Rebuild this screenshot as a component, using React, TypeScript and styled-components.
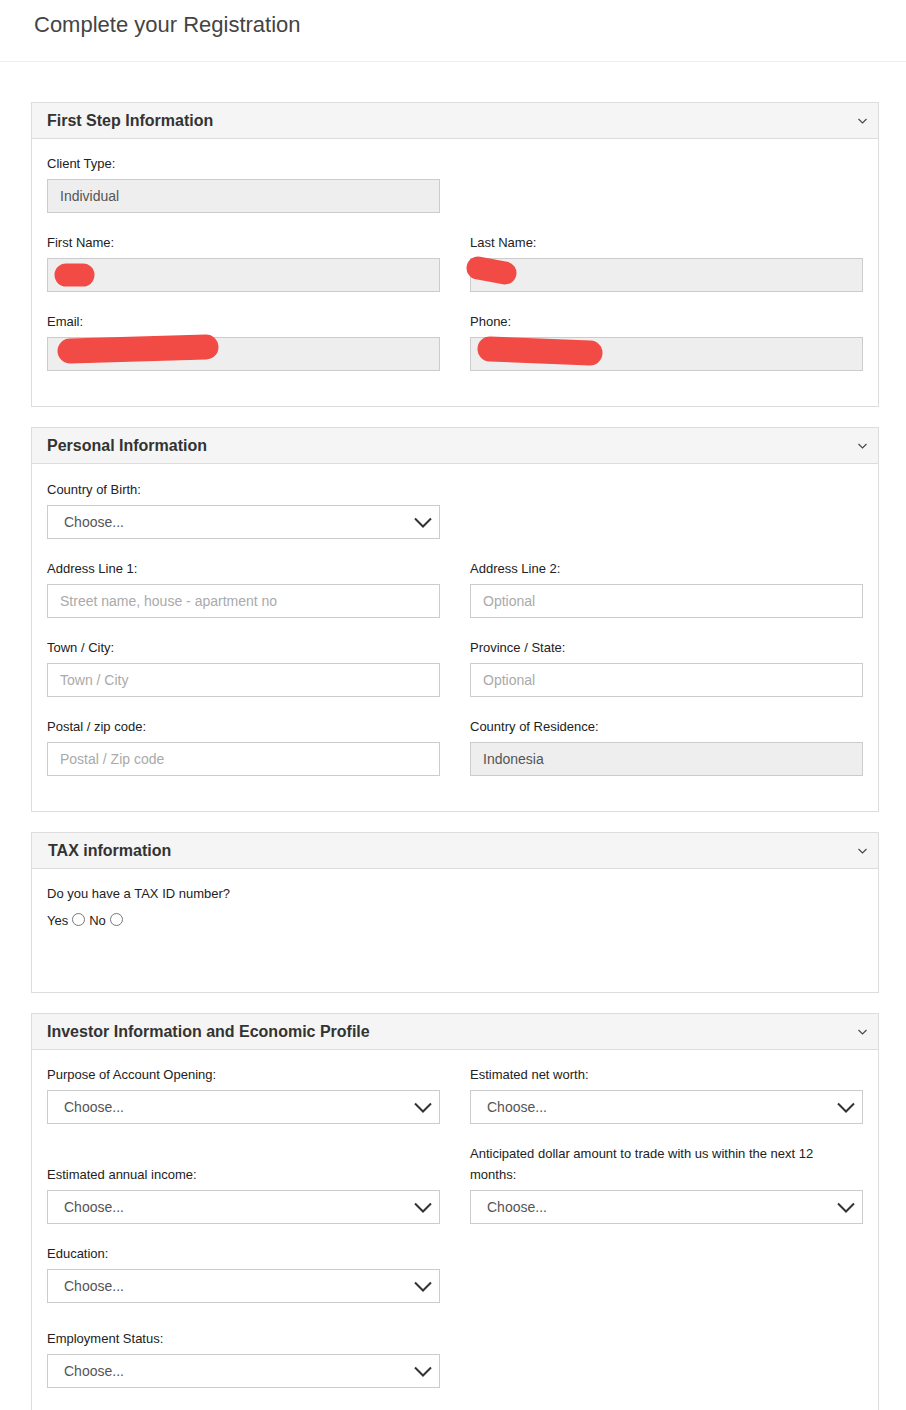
import styled, { createGlobalStyle } from "styled-components";

const GlobalStyle = createGlobalStyle`
  body {
    margin: 0;
    background: #fff;
    font-family: "Liberation Sans", Arial, sans-serif;
    color: #333;
  }
`;

const TopBar = styled.header`
  height: 61px;
  border-bottom: 1px solid #eee;
  display: flex;
  align-items: center;
  padding-left: 34px;
`;

const PageTitle = styled.h1`
  margin: 0;
  margin-top: -11px;
  font-size: 22px;
  font-weight: normal;
  color: #444;
`;

const Content = styled.main`
  padding: 40px 27px 0 31px;
  display: flex;
  flex-direction: column;
  gap: 20px;
`;

const Panel = styled.section`
  border: 1px solid #ddd;
  background: #fff;
`;

const PanelHead = styled.div<{ $indent?: number }>`
  height: 35px;
  background: #f5f5f5;
  border-bottom: 1px solid #ddd;
  display: flex;
  align-items: center;
  justify-content: space-between;
  padding: 0 11px 0 ${(p) => p.$indent ?? 15}px;
`;

const PanelTitle = styled.h2`
  margin: 0;
  font-size: 16px;
  font-weight: bold;
  color: #333;
`;

const PanelBody = styled.div<{ $top?: number }>`
  padding: ${(p) => p.$top ?? 15}px 15px 15px;
`;

const Row = styled.div<{ $alignEnd?: boolean }>`
  display: grid;
  grid-template-columns: 1fr 1fr;
  column-gap: 30px;
  align-items: ${(p) => (p.$alignEnd ? "end" : "start")};
`;

const Group = styled.div<{ $mb?: number }>`
  margin-bottom: ${(p) => p.$mb ?? 20}px;
`;

const Label = styled.label<{ $tall?: boolean }>`
  display: block;
  font-size: 13px;
  line-height: ${(p) => (p.$tall ? 20.5 : 20)}px;
  color: #222;
  margin-bottom: 5px;
`;

const FieldWrap = styled.div`
  position: relative;
`;

const TextInput = styled.input`
  box-sizing: border-box;
  width: 100%;
  height: 34px;
  border: 1px solid #ccc;
  border-radius: 0;
  padding: 0 12px;
  font-family: "Liberation Sans", Arial, sans-serif;
  font-size: 14px;
  color: #555;
  background: #fff;
  outline: none;

  &:disabled {
    background: #eee;
    color: #555;
  }

  &::placeholder {
    color: #aaa;
  }
`;

const SelectBox = styled.div`
  box-sizing: border-box;
  height: 34px;
  border: 1px solid #ccc;
  background: #fff;
  display: flex;
  align-items: center;
  justify-content: space-between;
  padding: 0 7px 0 16px;
  font-size: 14px;
  color: #555;
`;

const Scribble = styled.svg`
  position: absolute;
  left: 0;
  top: 0;
  overflow: visible;
  pointer-events: none;
`;

const Question = styled.div`
  font-size: 13px;
  line-height: 20px;
  color: #222;
  margin-bottom: 6px;
`;

const RadioLine = styled.div`
  display: flex;
  align-items: center;
  font-size: 13px;
  line-height: 22px;
  color: #222;
  margin-bottom: 45px;
`;

const Radio = styled.input`
  appearance: none;
  width: 13px;
  height: 13px;
  border: 1px solid #777;
  border-radius: 50%;
  margin: -3px 4px 0 4px;
  background: #fff;
`;

const Chevron = ({ big }: { big?: boolean }) =>
  big ? (
    <svg width="18" height="11" viewBox="0 0 18 11">
      <path d="M1 1.5 L9 9.5 L17 1.5" fill="none" stroke="#333" strokeWidth="2" />
    </svg>
  ) : (
    <svg width="9" height="6" viewBox="0 0 9 6">
      <path d="M0.5 1 L4.5 5 L8.5 1" fill="none" stroke="#444" strokeWidth="1.1" />
    </svg>
  );

const Select = ({ label, mb, twoLine }: { label: string; mb?: number; twoLine?: boolean }) => (
  <Group $mb={mb}>
    <Label $tall={twoLine}>{label}</Label>
    <SelectBox>
      Choose...
      <Chevron big />
    </SelectBox>
  </Group>
);

type Mark = { x1: number; y1: number; x2: number; y2: number; w: number };

const Field = ({
  label,
  placeholder,
  value,
  disabled,
  mark,
}: {
  label: string;
  placeholder?: string;
  value?: string;
  disabled?: boolean;
  mark?: Mark;
}) => (
  <Group>
    <Label>{label}</Label>
    <FieldWrap>
      <TextInput placeholder={placeholder} defaultValue={value} disabled={disabled} />
      {mark && (
        <Scribble width="1" height="1">
          <path
            d={`M${mark.x1} ${mark.y1} L${mark.x2} ${mark.y2}`}
            stroke="#f24b46"
            strokeWidth={mark.w}
            strokeLinecap="round"
            fill="none"
          />
        </Scribble>
      )}
    </FieldWrap>
  </Group>
);

function PanelHeader({ title, indent }: { title: string; indent?: number }) {
  return (
    <PanelHead $indent={indent}>
      <PanelTitle>{title}</PanelTitle>
      <Chevron />
    </PanelHead>
  );
}

function App() {
  return (
    <>
      <GlobalStyle />
      <TopBar>
        <PageTitle>Complete your Registration</PageTitle>
      </TopBar>
      <Content>
        <Panel>
          <PanelHeader title="First Step Information" />
          <PanelBody>
            <Row>
              <Field label="Client Type:" value="Individual" disabled />
            </Row>
            <Row>
              <Field
                label="First Name:"
                disabled
                mark={{ x1: 19, y1: 17, x2: 36, y2: 17, w: 23 }}
              />
              <Field
                label="Last Name:"
                disabled
                mark={{ x1: 8, y1: 10, x2: 35, y2: 15, w: 23 }}
              />
            </Row>
            <Row>
              <Field
                label="Email:"
                disabled
                mark={{ x1: 23, y1: 14, x2: 159, y2: 10, w: 25 }}
              />
              <Field
                label="Phone:"
                disabled
                mark={{ x1: 20, y1: 12, x2: 120, y2: 16, w: 25 }}
              />
            </Row>
          </PanelBody>
        </Panel>

        <Panel>
          <PanelHeader title="Personal Information" />
          <PanelBody $top={16}>
            <Row>
              <Select label="Country of Birth:" />
            </Row>
            <Row>
              <Field label="Address Line 1:" placeholder="Street name, house - apartment no" />
              <Field label="Address Line 2:" placeholder="Optional" />
            </Row>
            <Row>
              <Field label="Town / City:" placeholder="Town / City" />
              <Field label="Province / State:" placeholder="Optional" />
            </Row>
            <Row>
              <Field label="Postal / zip code:" placeholder="Postal / Zip code" />
              <Field label="Country of Residence:" value="Indonesia" disabled />
            </Row>
          </PanelBody>
        </Panel>

        <Panel>
          <PanelHeader title="TAX information" indent={16} />
          <PanelBody>
            <Question>Do you have a TAX ID number?</Question>
            <RadioLine>
              Yes <Radio type="radio" name="tax" /> No <Radio type="radio" name="tax" />
            </RadioLine>
          </PanelBody>
        </Panel>

        <Panel>
          <PanelHeader title="Investor Information and Economic Profile" />
          <PanelBody>
            <Row>
              <Select label="Purpose of Account Opening:" />
              <Select label="Estimated net worth:" />
            </Row>
            <Row $alignEnd>
              <Select label="Estimated annual income:" />
              <Select
                twoLine
                label="Anticipated dollar amount to trade with us within the next 12 months:"
              />
            </Row>
            <Row>
              <Select label="Education:" mb={26} />
            </Row>
            <Row>
              <Select label="Employment Status:" mb={40} />
            </Row>
          </PanelBody>
        </Panel>
      </Content>
    </>
  );
}

export default App;
